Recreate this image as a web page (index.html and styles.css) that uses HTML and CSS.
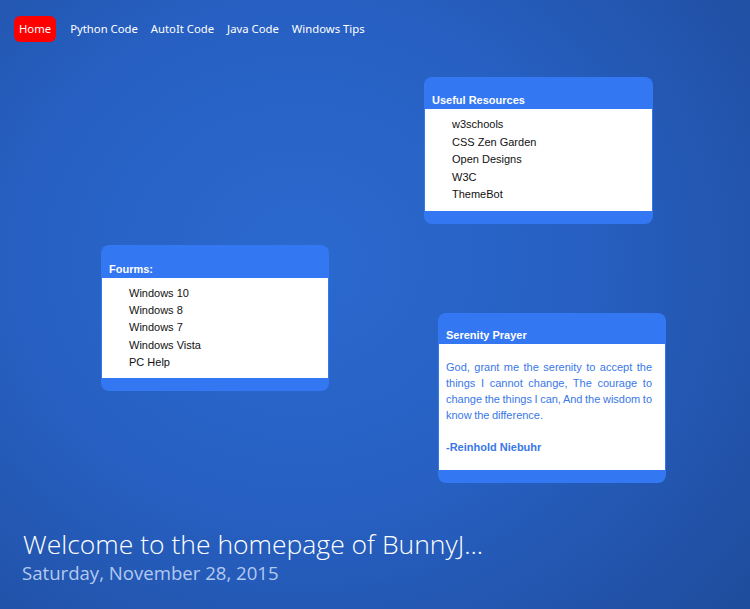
FILE: index.html
```html
<!DOCTYPE html>
<html>
<head>
<meta charset="utf-8">
<link rel="stylesheet" href="styles.css">
</head>
<body>
<div class="desktop">
  <nav class="nav">
    <a class="nav-item active">Home</a>
    <a class="nav-item">Python Code</a>
    <a class="nav-item">AutoIt Code</a>
    <a class="nav-item">Java Code</a>
    <a class="nav-item">Windows Tips</a>
  </nav>

  <div class="widget w-resources">
    <div class="w-head">Useful Resources</div>
    <ul class="w-body w-list">
      <li>w3schools</li>
      <li>CSS Zen Garden</li>
      <li>Open Designs</li>
      <li>W3C</li>
      <li>ThemeBot</li>
    </ul>
    <div class="w-foot"></div>
  </div>

  <div class="widget w-forums">
    <div class="w-head">Fourms:</div>
    <ul class="w-body w-list">
      <li>Windows 10</li>
      <li>Windows 8</li>
      <li>Windows 7</li>
      <li>Windows Vista</li>
      <li>PC Help</li>
    </ul>
    <div class="w-foot"></div>
  </div>

  <div class="widget w-prayer">
    <div class="w-head">Serenity Prayer</div>
    <div class="w-body w-text">
      <p class="prayer">God, grant me the serenity to accept the things I cannot change, The courage to change the things I can, And the wisdom to know the difference.</p>
      <p class="author">-Reinhold Niebuhr</p>
    </div>
    <div class="w-foot"></div>
  </div>

  <div class="welcome">
    <div class="welcome-title">Welcome to the homepage of BunnyJ...</div>
    <div class="welcome-date">Saturday, November 28, 2015</div>
  </div>
</div>
</body>
</html>
```

FILE: styles.css
```css
html, body {
  margin: 0;
  padding: 0;
  height: 100%;
}
body {
  background: radial-gradient(ellipse 620px 560px at 300px 260px, #2b69cf 0%, #2760c2 45%, #2152a8 80%, #1e4a98 100%);
  overflow: hidden;
}
.desktop {
  position: relative;
  width: 750px;
  height: 609px;
}
.nav {
  display: flex;
  align-items: center;
  gap: 13px;
  padding: 16px 0 0 14px;
  font-family: "Noto Sans", "Open Sans", sans-serif;
  font-size: 11.3px;
}
.nav-item {
  color: #ffffff;
  height: 26px;
  line-height: 26px;
}
.nav-item.active {
  background: #ff0000;
  padding: 0 5px;
  border-radius: 6px;
  margin-right: 1px;
}
.widget {
  position: absolute;
  background: #3377f2;
  border-radius: 8px;
  padding: 0 1px;
  font-family: "Liberation Sans", Arial, sans-serif;
  font-size: 11px;
}
.w-head {
  color: #ffffff;
  font-weight: bold;
  padding: 0 7px 3px;
  display: flex;
  align-items: flex-end;
}
.w-body {
  background: #ffffff;
  margin: 0;
}
.w-foot {
  height: 13px;
}
.w-list {
  list-style: none;
  padding: 7.25px 0 7.25px 27px;
  color: #111111;
}
.w-list li {
  height: 17.5px;
  line-height: 17.5px;
}
.w-forums .w-list {
  padding-top: 7px;
  padding-bottom: 7px;
}
.w-forums .w-list li {
  height: 17.2px;
  line-height: 17.2px;
}
.w-text {
  padding: 15px 13px 15px 7px;
  color: #3a78e6;
  line-height: 16px;
}
.w-text p {
  margin: 0;
}
.prayer {
  text-align: justify;
  word-spacing: -0.6px;
}
.author {
  margin-top: 16px !important;
  font-weight: bold;
}
.w-resources {
  left: 424px;
  top: 77px;
  width: 227px;
}
.w-resources .w-head { height: 29px; }
.w-forums {
  left: 101px;
  top: 245px;
  width: 226px;
}
.w-forums .w-head { height: 30px; }
.w-prayer {
  left: 438px;
  top: 313px;
  width: 226px;
}
.w-prayer .w-head { height: 28px; }
.welcome {
  position: absolute;
  left: 22px;
  top: 526px;
  font-family: "Open Sans", "Noto Sans", sans-serif;
}
.welcome-title {
  color: #ffffff;
  font-size: 26.5px;
  font-weight: 300;
  line-height: 36px;
  padding-left: 1px;
}
.welcome-date {
  color: #b3c9f0;
  font-size: 18.6px;
  font-weight: 400;
  line-height: 22px;
}
```
